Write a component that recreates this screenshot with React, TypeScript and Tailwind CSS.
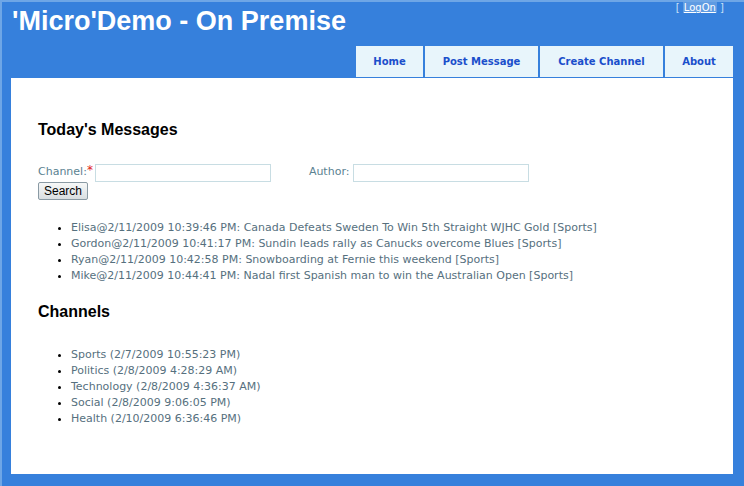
import React from "react";

const messages = [
  "Elisa@2/11/2009 10:39:46 PM: Canada Defeats Sweden To Win 5th Straight WJHC Gold [Sports]",
  "Gordon@2/11/2009 10:41:17 PM: Sundin leads rally as Canucks overcome Blues [Sports]",
  "Ryan@2/11/2009 10:42:58 PM: Snowboarding at Fernie this weekend [Sports]",
  "Mike@2/11/2009 10:44:41 PM: Nadal first Spanish man to win the Australian Open [Sports]",
];

const channels = [
  "Sports (2/7/2009 10:55:23 PM)",
  "Politics (2/8/2009 4:28:29 AM)",
  "Technology (2/8/2009 4:36:37 AM)",
  "Social (2/8/2009 9:06:05 PM)",
  "Health (2/10/2009 6:36:46 PM)",
];

const tabs = [
  { label: "Home", w: "w-[67px]" },
  { label: "Post Message", w: "w-[113px]" },
  { label: "Create Channel", w: "w-[123px]" },
  { label: "About", w: "w-[68px]" },
];

export default function App() {
  return (
    <div className="w-[744px] h-[486px] bg-[#3680dc] border-t-2 border-l-2 border-[#6ea6e6] flex flex-col pl-[9px] pr-[11px] pb-[12px] overflow-hidden">
      <div className="flex justify-between h-[44px]">
        <div className="text-white font-bold text-[27px] leading-[30px] pt-[4px] pl-[1px] font-['Liberation_Sans',Arial,sans-serif]">
          'Micro'Demo - On Premise
        </div>
        <div className="text-[10px] leading-[12px] pr-[9px] pt-[0px] text-[#c9e0f7] font-['DejaVu_Sans',Verdana,sans-serif] whitespace-pre">
          {"[ "}
          <span className="underline text-white bg-[#5f9be2] px-[1px]">LogOn</span>
          {" ]"}
        </div>
      </div>
      <div className="flex justify-end gap-[2px] h-[31px] mb-[1px]">
        {tabs.map((t) => (
          <div
            key={t.label}
            className={`${t.w} bg-[#e8f5fb] flex items-center justify-center text-[#1b4fcb] font-bold text-[10px] font-['DejaVu_Sans',Verdana,sans-serif]`}
          >
            {t.label}
          </div>
        ))}
      </div>
      <div className="flex-1 bg-white pl-[27px] pt-[42px] font-['DejaVu_Sans',Verdana,sans-serif]">
        <h2 className="text-[16px] leading-[20px] font-bold text-black font-['Liberation_Sans',Arial,sans-serif]">
          Today's Messages
        </h2>
        <div className="mt-[23px] flex items-center text-[11px] text-[#5b8291] h-[19px]">
          <span>Channel:</span>
          <span className="text-[#e02020] text-[12px] leading-[10px] self-start mt-[2px]">*</span>
          <div className="ml-[2px] w-[176px] h-[18px] border border-[#c8dde3]" />
          <span className="ml-[38px]">Author:</span>
          <div className="ml-[4px] w-[176px] h-[18px] border border-[#c8dde3]" />
        </div>
        <button className="block w-[50px] h-[18px] border border-[#8a9aa4] rounded-[2px] bg-gradient-to-b from-[#f7f8f8] to-[#d9dee1] text-black text-[12px] leading-[16px] font-['Liberation_Sans',Arial,sans-serif]">
          Search
        </button>
        <ul className="mt-[20px] ml-[33px] list-disc text-[11px] leading-[16px] text-[#56707e] marker:text-black">
          {messages.map((m) => (
            <li key={m}>{m}</li>
          ))}
        </ul>
        <h2 className="mt-[18px] text-[16px] leading-[20px] font-bold text-black font-['Liberation_Sans',Arial,sans-serif]">
          Channels
        </h2>
        <ul className="mt-[25px] ml-[33px] list-disc text-[11px] leading-[16px] text-[#56707e] marker:text-black">
          {channels.map((c) => (
            <li key={c}>{c}</li>
          ))}
        </ul>
      </div>
    </div>
  );
}
